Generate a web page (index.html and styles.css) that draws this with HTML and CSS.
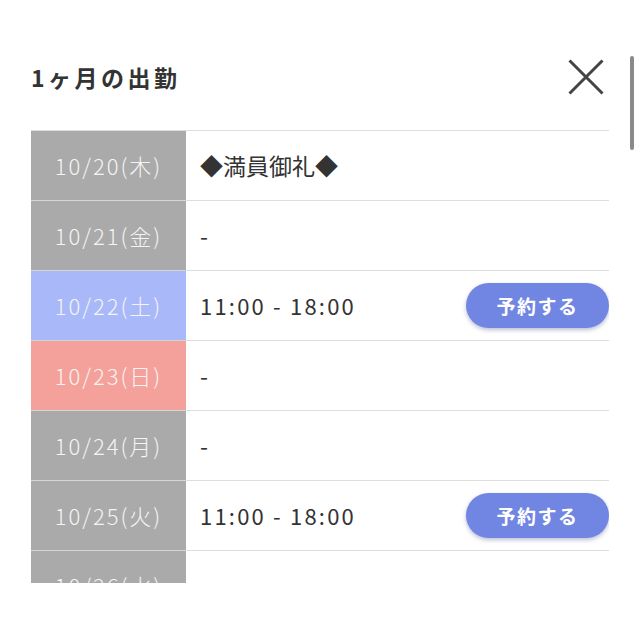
FILE: index.html
```html
<!DOCTYPE html>
<html lang="ja">
<head>
  <meta charset="UTF-8">
  <meta name="viewport" content="width=device-width, initial-scale=1.0">
  <title>1ヶ月の出勤</title>
  <link rel="stylesheet" href="styles.css">
</head>
<body>
  <div class="modal">
    <div class="modal-header">
      <h2 class="modal-title">1ヶ月の出勤</h2>
      <button class="btn-close" aria-label="閉じる">
        <svg width="36" height="36" viewBox="0 0 36 36">
          <path d="M1.5 1.5 L34.5 34.5 M34.5 1.5 L1.5 34.5" stroke="#444" stroke-width="3" fill="none"/>
        </svg>
      </button>
    </div>

    <div class="schedule">
      <div class="row">
        <div class="date">10/20(木)</div>
        <div class="info">◆満員御礼◆</div>
      </div>
      <div class="row">
        <div class="date">10/21(金)</div>
        <div class="info">-</div>
      </div>
      <div class="row">
        <div class="date sat">10/22(土)</div>
        <div class="info">
          <span class="time">11:00 - 18:00</span>
          <button class="btn-reserve">予約する</button>
        </div>
      </div>
      <div class="row">
        <div class="date sun">10/23(日)</div>
        <div class="info">-</div>
      </div>
      <div class="row">
        <div class="date">10/24(月)</div>
        <div class="info">-</div>
      </div>
      <div class="row">
        <div class="date">10/25(火)</div>
        <div class="info">
          <span class="time">11:00 - 18:00</span>
          <button class="btn-reserve">予約する</button>
        </div>
      </div>
      <div class="row">
        <div class="date">10/26(水)</div>
        <div class="info"></div>
      </div>
    </div>

    <!-- scroll thumb of the modal -->
    <div class="scroll-thumb"></div>
  </div>
</body>
</html>
```

FILE: styles.css
```css
body {
  margin: 0;
  background: #fff;
  font-family: "Noto Sans CJK JP", "Noto Sans", sans-serif;
  color: #333;
}

.modal {
  position: relative;
  width: 640px;
  height: 640px;
  padding: 52px 31px 0;
  box-sizing: border-box;
}

.modal-header {
  display: flex;
  align-items: center;
  justify-content: space-between;
  height: 50px;
  margin-bottom: 28px;
}

.modal-title {
  margin: 0;
  font-size: 23px;
  font-weight: 700;
  letter-spacing: 3.5px;
  color: #333;
}

.btn-close {
  padding: 0;
  margin-right: 5px;
  border: none;
  background: none;
  display: flex;
  cursor: pointer;
}

.schedule {
  height: 452px;
  overflow: hidden;
  border-top: 1px solid #ddd;
}

.row {
  display: flex;
  height: 69px;
  border-bottom: 1px solid #ddd;
}

.date {
  width: 155px;
  flex-shrink: 0;
  display: flex;
  align-items: center;
  justify-content: center;
  background: #aaa;
  color: #f4f4f4;
  font-size: 22px;
  font-weight: 300;
  letter-spacing: 2px;
  padding-bottom: 2px;
  box-sizing: border-box;
  border-bottom: 1px solid #d6d6d6;
  margin-bottom: -1px;
}

.date.sat {
  background: #a9b8f8;
}

.date.sun {
  background: #f4a19b;
}

.info {
  flex: 1;
  display: flex;
  align-items: center;
  justify-content: space-between;
  padding-left: 14px;
  padding-bottom: 2px;
  font-size: 23px;
  color: #333;
}

.time {
  font-size: 22px;
  letter-spacing: 2.2px;
}

.btn-reserve {
  width: 143px;
  height: 45px;
  margin-top: 2px;
  border: none;
  border-radius: 23px;
  background: #7186e2;
  color: #fff;
  font-family: inherit;
  font-size: 19px;
  font-weight: 700;
  letter-spacing: 1.5px;
  box-shadow: 0 2px 4px rgba(60, 70, 140, 0.35);
  cursor: pointer;
}

.scroll-thumb {
  position: absolute;
  left: 630px;
  top: 56px;
  width: 4px;
  height: 94px;
  border-radius: 2px;
  background: #8a8a8a;
}
```
